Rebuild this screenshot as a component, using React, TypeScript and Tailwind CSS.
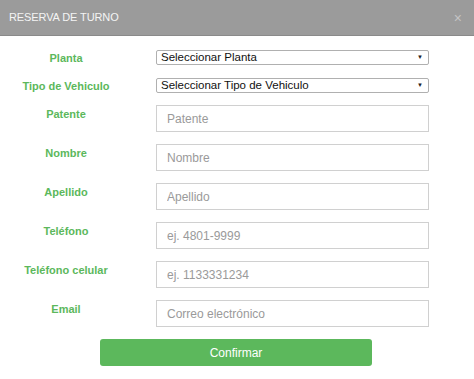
import { useState } from "react";

// filas de campos de texto del formulario
const campos = [
  { label: "Patente", placeholder: "Patente", type: "text" },
  { label: "Nombre", placeholder: "Nombre", type: "text" },
  { label: "Apellido", placeholder: "Apellido", type: "text" },
  { label: "Teléfono", placeholder: "ej. 4801-9999", type: "tel" },
  { label: "Teléfono celular", placeholder: "ej. 1133331234", type: "tel" },
  { label: "Email", placeholder: "Correo electrónico", type: "email" },
];

function SelectRow({ label, value }: { label: string; value: string }) {
  return (
    <div className="flex items-center h-[15px]">
      <label className="w-[132px] text-center text-[11px] leading-[14px] font-bold text-[#5cb85c]">{label}</label>
      <div className="relative ml-[24px] w-[273px] h-[15px] flex">
        <select
          className="block appearance-none w-full h-[15px] border border-[#b0b0b0] rounded-[2px] bg-white pl-[4px] py-0 text-[11.5px] leading-[13px] text-[#111] outline-none"
          defaultValue=""
        >
          <option value="">{value}</option>
        </select>
        <span className="pointer-events-none absolute right-[6px] top-[1px] text-[6px] leading-[13px] text-[#222]">▼</span>
      </div>
    </div>
  );
}

export default function App() {
  const [valores, setValores] = useState<Record<string, string>>({});

  return (
    <div className="w-[474px] h-[379px] bg-white font-['Liberation_Sans',Arial,sans-serif] overflow-hidden">
      <div className="h-[36px] bg-[#9b9b9b] border-b border-[#8a8a8a] flex items-center justify-between pl-[9px] pr-[12px]">
        <span className="text-[11px] tracking-[-0.1px] text-[#f4f4f4]">RESERVA DE TURNO</span>
        <button className="text-[14px] leading-none text-[#c4c4c4]" aria-label="Cerrar">×</button>
      </div>

      <div className="pt-[14px] flex flex-col">
        <div className="flex flex-col gap-[13px]">
          <SelectRow label="Planta" value="Seleccionar Planta" />
          <SelectRow label="Tipo de Vehiculo" value="Seleccionar Tipo de Vehiculo" />
        </div>

        <div className="mt-[12px] flex flex-col gap-[12px]">
          {campos.map((c) => (
            <div key={c.label} className="flex items-start">
              <label className="w-[132px] pt-[2px] text-center text-[11px] leading-[14px] font-bold text-[#5cb85c]">
                {c.label}
              </label>
              <input
                type={c.type}
                placeholder={c.placeholder}
                value={valores[c.label] || ""}
                onChange={(e) => setValores({ ...valores, [c.label]: e.target.value })}
                className="ml-[24px] w-[273px] h-[27px] border border-[#d0d0d0] px-[10px] text-[12px] text-[#333] placeholder:text-[#9a9a9a] outline-none"
              />
            </div>
          ))}
        </div>

        <div className="mt-[12px] flex justify-center">
          <button className="ml-[-2px] w-[272px] h-[27px] rounded-[3px] bg-[#5cb85c] text-white text-[12px]">Confirmar</button>
        </div>
      </div>
    </div>
  );
}
